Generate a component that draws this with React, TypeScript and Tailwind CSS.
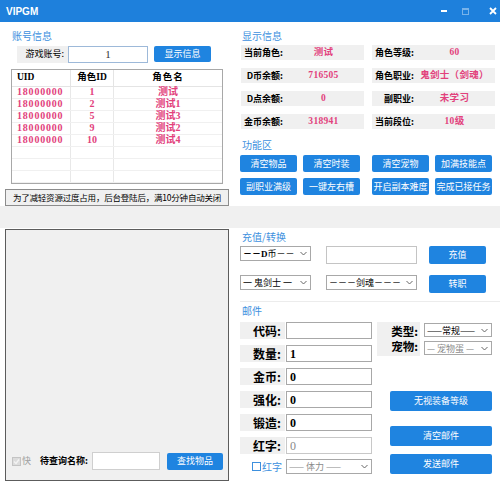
import React from 'react';

const cjk = 'font-[family-name:Noto_Sans_CJK_SC,sans-serif]';
const serif = 'font-[family-name:Liberation_Serif,Noto_Sans_CJK_SC,serif]';

const Chevron = () => (
  <svg width="7" height="5" viewBox="0 0 7 5" className="shrink-0">
    <path d="M0.5 1 L3.5 4 L6.5 1" fill="none" stroke="#666" strokeWidth="1" />
  </svg>
);

const Btn = ({ label, className = '' }: { label: string; className?: string }) => (
  <div
    className={`flex shrink-0 items-center justify-center rounded-[2px] bg-[#1f84e0] text-[9px] text-white ${className}`}
  >
    {label}
  </div>
);

const Select = ({
  children,
  className = '',
  muted = false,
}: {
  children: React.ReactNode;
  className?: string;
  muted?: boolean;
}) => (
  <div
    className={`flex shrink-0 items-center justify-between border border-[#a8a8a8] bg-white pl-[2px] pr-[3px] text-[9px] leading-none ${
      muted ? 'text-[#8a8a8a]' : 'text-black'
    } ${className}`}
  >
    <span className="whitespace-nowrap">{children}</span>
    <Chevron />
  </div>
);

const SectionTitle = ({ text, className = '' }: { text: string; className?: string }) => (
  <div className={`flex h-[12px] items-center text-[10px] leading-none text-[#3d90de] ${className}`}>{text}</div>
);

const info = [
  ['当前角色:', '测试', '角色等级:', '60'],
  ['D币余额:', '716505', '角色职业:', '鬼剑士（剑魂）'],
  ['D点余额:', '0', '副职业:', '未学习'],
  ['金币余额:', '318941', '当前段位:', '10级'],
];

const roles = [
  ['18000000', '1', '测试'],
  ['18000000', '2', '测试1'],
  ['18000000', '5', '测试3'],
  ['18000000', '9', '测试2'],
  ['18000000', '10', '测试4'],
  ['', '', ''],
  ['', '', ''],
  ['', '', ''],
];

const actions = [
  ['清空物品', '清空时装', '清空宠物', '加满技能点'],
  ['副职业满级', '一键左右槽', '开启副本难度', '完成已接任务'],
];

const mailFields = [
  ['代码:', ''],
  ['数量:', '1'],
  ['金币:', '0'],
  ['强化:', '0'],
  ['锻造:', '0'],
  ['红字:', '0'],
];

const InfoStrip = ({ label, value }: { label: string; value: string }) => (
  <div className="flex h-[15px] w-[123px] items-center bg-[#f0f0f0]">
    <span className="w-[42px] whitespace-nowrap text-right text-[9px] font-semibold text-black">{label}</span>
    <span className={`flex-1 text-center text-[9.5px] font-bold tracking-[0.3px] text-[#e2417c] ${serif}`}>{value}</span>
  </div>
);

export default function App() {
  return (
    <div className={`flex h-[500px] w-[500px] flex-col overflow-hidden bg-white ${cjk}`}>
      {/* Title bar */}
      <div className="flex h-[22px] shrink-0 items-center bg-[#1e80dc] pl-[6px]">
        <span className="font-[family-name:Liberation_Sans,sans-serif] text-[10px] font-bold text-white">VIPGM</span>
        <div className="ml-auto flex items-center">
          <div className="h-[2px] w-[6px] bg-white" />
          <div className="ml-[15px] h-[7px] w-[7px] border border-t-2 border-white opacity-40" />
          <svg width="8" height="8" viewBox="0 0 8 8" className="ml-[20px] mr-[3px]">
            <path d="M1 1 L7 7 M7 1 L1 7" stroke="white" strokeWidth="1.8" />
          </svg>
        </div>
      </div>

      {/* Top section */}
      <div className="flex h-[184px] shrink-0">
        {/* Account info */}
        <div className="flex w-[240px] shrink-0 flex-col">
          <SectionTitle text="账号信息" className="ml-[12px] mt-[8px]" />
          <div className="ml-[17px] mt-[4px] flex h-[17px] items-center">
            <div className="flex h-full w-[51px] items-center justify-end bg-[#f0f0f0] pr-[4px] text-[9px] text-black">
              游戏账号:
            </div>
            <div className="flex h-full w-[80px] items-center justify-center border border-[#9db9d9] bg-white text-[11px] text-[#333]">
              <span className={serif}>1</span>
            </div>
            <Btn label="显示信息" className="ml-[6px] h-[16px] w-[57px]" />
          </div>
          <div className="ml-[11px] mt-[6px] flex w-[212px] flex-col border border-[#a8a8a8] bg-white">
            <div className="grid h-[17px] grid-cols-[59px_43px_1fr] border-b border-[#e4e4e4] text-[9.5px] font-bold text-black">
              <div className={`flex items-center border-r border-[#e4e4e4] pl-[5px] ${serif}`}>UID</div>
              <div className={`flex items-center justify-center border-r border-[#e4e4e4] ${serif}`}>角色ID</div>
              <div className={`flex items-center justify-center tracking-[1px] ${serif}`}>角色名</div>
            </div>
            {roles.map((r, i) => (
              <div
                key={i}
                className={`grid h-[12px] grid-cols-[59px_43px_1fr] border-b border-[#f0f0f0] text-[10px] font-bold leading-none text-[#e2417c] ${serif}`}
              >
                <div className="flex items-center border-r border-[#e8e8e8] pl-[5px] tracking-[0.8px]">{r[0]}</div>
                <div className="flex items-center justify-center border-r border-[#e8e8e8]">{r[1]}</div>
                <div className="flex items-center justify-center">{r[2]}</div>
              </div>
            ))}
          </div>
          <div className="ml-[5px] mt-[5px] flex h-[18px] w-[224px] items-center justify-center overflow-hidden border border-[#8c8c8c] bg-[#f0f0f0] text-[8.5px] tracking-[-0.2px] whitespace-nowrap text-black">
            为了减轻资源过度占用，后台登陆后，满10分钟自动关闭
          </div>
        </div>

        {/* Display info + actions */}
        <div className="flex flex-1 flex-col">
          <SectionTitle text="显示信息" className="ml-[2px] mt-[8px]" />
          <div className="ml-[1px] mt-[3px] flex flex-col gap-[8px]">
            {info.map((row, i) => (
              <div key={i} className="flex gap-[8px]">
                <InfoStrip label={row[0]} value={row[1]} />
                <InfoStrip label={row[2]} value={row[3]} />
              </div>
            ))}
          </div>
          <SectionTitle text="功能区" className="ml-[2px] mt-[10px]" />
          <div className="mt-[4px] flex flex-col gap-[6px]">
            {actions.map((row, i) => (
              <div key={i} className="flex">
                <Btn label={row[0]} className="h-[17px] w-[57px]" />
                <Btn label={row[1]} className="ml-[6px] h-[17px] w-[57px]" />
                <Btn label={row[2]} className="ml-[12px] h-[17px] w-[57px]" />
                <Btn label={row[3]} className="ml-[6px] h-[17px] w-[57px]" />
              </div>
            ))}
          </div>
        </div>
      </div>

      {/* Grey band */}
      <div className="h-[22px] shrink-0 bg-[#f0f0f0]" />

      {/* Bottom section */}
      <div className="flex flex-1">
        {/* Item search */}
        <div className="flex w-[240px] shrink-0 flex-col">
          <div className="ml-[5px] mt-[1px] flex h-[252px] w-[224px] flex-col justify-end border border-[#5c5c5c] bg-[#f0f0f0] pb-[10px]">
            <div className="flex h-[18px] items-center pl-[6px]">
              <div className="flex h-[9px] w-[9px] items-center justify-center border border-[#c4c4c4] bg-[#dcdcdc]">
                <svg width="7" height="7" viewBox="0 0 7 7">
                  <path d="M1 3.5 L3 5.5 L6 1.5" fill="none" stroke="#f4f4f4" strokeWidth="1.3" />
                </svg>
              </div>
              <span className="ml-[1px] text-[9px] text-[#a0a0a0]">快</span>
              <span className="ml-[9px] text-[9px] font-semibold text-black">待查询名称:</span>
              <div className="ml-[4px] h-[18px] w-[68px] border border-[#cfcfcf] bg-white" />
              <Btn label="查找物品" className="ml-[7px] h-[17px] w-[56px]" />
            </div>
          </div>
        </div>

        {/* Recharge + mail */}
        <div className="flex flex-1 flex-col">
          <SectionTitle text="充值/转换" className="ml-[2px] mt-[3px]" />
          <div className="mt-[3px] flex h-[18px] items-start">
            <Select className="h-[15px] w-[71px]">
              <span className="font-bold">－－</span>
              <span className={`font-bold ${serif}`}>D</span>币－－
            </Select>
            <div className="ml-[15px] h-[18px] w-[91px] border border-[#c4c4c4] bg-white" />
            <Btn label="充值" className="ml-[12px] h-[18px] w-[57px]" />
          </div>
          <div className="mt-[11px] flex h-[18px] items-start">
            <Select className="h-[15px] w-[71px]">一 鬼剑士 一</Select>
            <Select className="ml-[15px] h-[15px] w-[91px]">－－－剑魂－－－</Select>
            <Btn label="转职" className="ml-[12px] h-[18px] w-[57px]" />
          </div>
          <div className="mt-[8px] border-t border-[#ececec]" />
          <SectionTitle text="邮件" className="ml-[2px] mt-[3px]" />
          <div className="mt-[5px] flex">
            {/* Mail fields */}
            <div className="flex w-[132px] shrink-0 flex-col">
              <div className="flex flex-col gap-[6px]">
                {mailFields.map(([label, value], i) => (
                  <div key={i} className="flex h-[17px]">
                    <div className="flex w-[45px] items-center justify-end bg-[#f0f0f0] pr-[4px] text-[12px] font-bold text-black">
                      {label}
                    </div>
                    <div
                      className={`ml-[1px] flex w-[86px] items-center border bg-white pl-[3px] text-[12px] ${serif} ${
                        i === 5 ? 'border-[#c8c8c8] text-[#8a8a8a]' : 'border-[#a8a8a8] font-bold text-black'
                      }`}
                    >
                      {value}
                    </div>
                  </div>
                ))}
              </div>
              <div className="mt-[5px] flex h-[15px] items-center">
                <div className="ml-[12px] h-[9px] w-[9px] border border-[#3d90de] bg-white" />
                <span className="ml-[1px] text-[10px] text-[#3d90de]">红字</span>
                <Select muted className="ml-[4px] h-[15px] w-[86px]">—— 体力 ——</Select>
              </div>
            </div>

            {/* Mail options */}
            <div className="ml-[5px] flex w-[115px] flex-col">
              <div className="flex h-[34px]">
                <div className="flex w-[43px] flex-col items-end justify-center bg-[#f0f0f0] pr-[2px] text-[11.5px] font-bold leading-[15px] text-black">
                  <span>类型:</span>
                  <span>宠物:</span>
                </div>
                <div className="ml-[4px] flex flex-col gap-[4px] pt-[1px]">
                  <Select className="h-[14px] w-[68px]">——常规——</Select>
                  <Select muted className="h-[14px] w-[68px]">— 宠物蛋 —</Select>
                </div>
              </div>
              <Btn label="无视装备等级" className="ml-[13px] mt-[35px] h-[20px] w-[102px]" />
              <Btn label="清空邮件" className="ml-[13px] mt-[15px] h-[20px] w-[102px]" />
              <Btn label="发送邮件" className="ml-[13px] mt-[8px] h-[20px] w-[102px]" />
            </div>
          </div>
        </div>
      </div>
    </div>
  );
}
